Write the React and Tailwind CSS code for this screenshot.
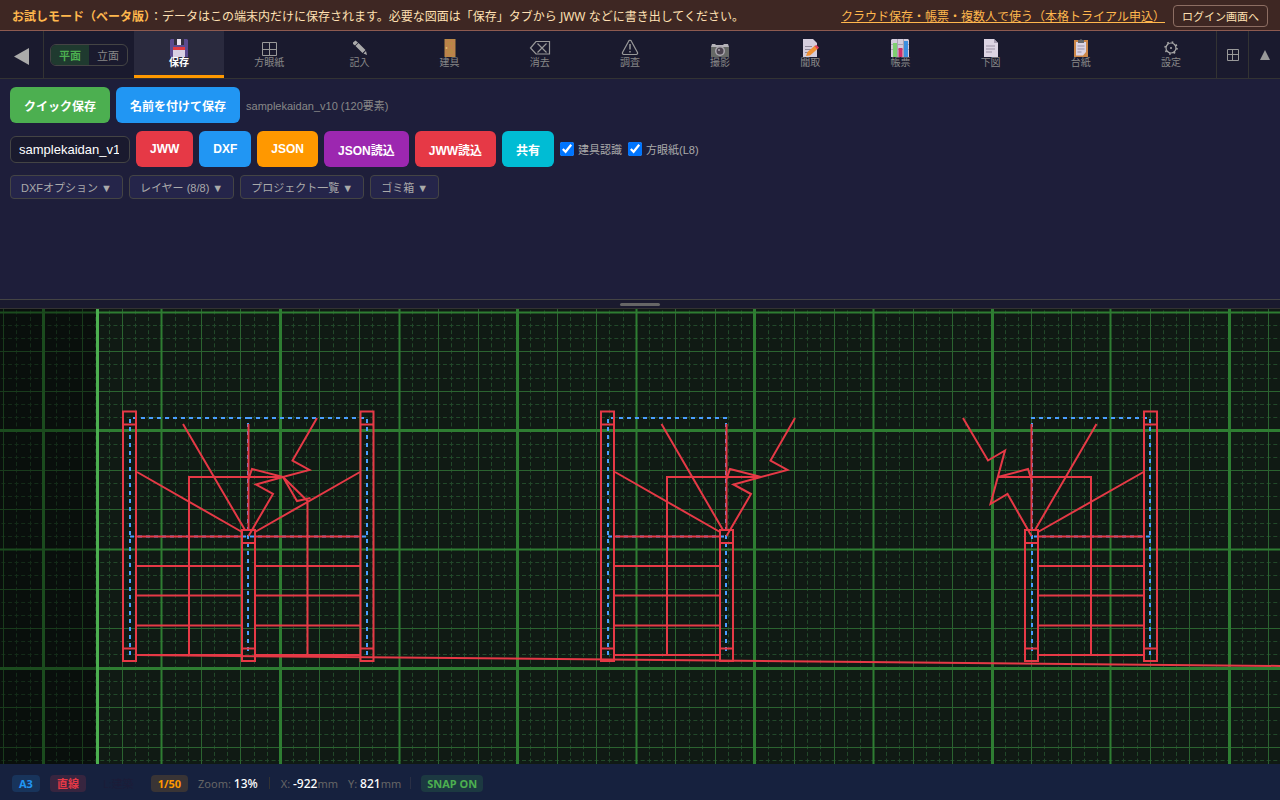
import React from 'react';

const TABS = [
  { icon: 'floppy', label: '保存', active: true },
  { icon: 'grid', label: '方眼紙' },
  { icon: 'pencil', label: '記入' },
  { icon: 'door', label: '建具' },
  { icon: 'erase', label: '消去' },
  { icon: 'warning', label: '調査' },
  { icon: 'camera', label: '撮影' },
  { icon: 'memo', label: '聞取' },
  { icon: 'chart', label: '帳票' },
  { icon: 'page', label: '下図' },
  { icon: 'clipboard', label: '台紙' },
  { icon: 'gear', label: '設定' },
];

const ACTIONS = [
  { label: 'JWW', color: 'bg-[#e63946]' },
  { label: 'DXF', color: 'bg-[#2196f3]' },
  { label: 'JSON', color: 'bg-[#ff9800]' },
  { label: 'JSON読込', color: 'bg-[#9c27b0]' },
  { label: 'JWW読込', color: 'bg-[#e63946]' },
  { label: '共有', color: 'bg-[#00bcd4]' },
];

const PANELS = ['DXFオプション ▼', 'レイヤー (8/8) ▼', 'プロジェクト一覧 ▼', 'ゴミ箱 ▼'];

const ICONS = {
  floppy: (
    <>
      <path d="M1 0h16l1 1v17H1L0 17V1Z" fill="#5b4b8f" />
      <path d="M4 0h10v6H4Z" fill="#32303f" />
      <path d="M7 0h4v6H7Z" fill="#e6e0ee" />
      <path d="M3 9h12v9H3Z" fill="#d9d0e3" />
      <path d="M3 8h12v3H3Z" fill="#e23b41" />
    </>
  ),
  grid: <path d="M2.500 3.500h14v13h-14ZM9.500 3.500v13M2.500 10.500h14" fill="none" stroke="#999" />,
  pencil: (
    <path d="M3 3.500l2.500-2 2.500 2-3 3L3 5ZM5.500 7l3-3 7 7-3 3ZM13.500 14.500l2.500-2.500 1 4Z" fill="#aaa" />
  ),
  door: (
    <>
      <path d="M3.500 0h11v18h-11Z" fill="#b98847" />
      <path d="M5 2h8v5H5ZM5 9h8v7H5Z" fill="none" stroke="#c87458" strokeDasharray="1 1" />
      <circle cx="5.500" cy="9" r="1" fill="#e3bd72" />
    </>
  ),
  erase: <path d="M-.5 9l5.500-6.500H18.500v12.500H5ZM6.500 4.500l9 9M15.500 4.500l-9 9" fill="none" stroke="#999" strokeWidth="1.200" />,
  warning: (
    <>
      <path d="M9 1.500Q10 1 10.500 2.500L16.500 13.500Q17 15 15.500 15.500H2.500Q1 15 1.500 13.500L7.500 2.500Q8 1 9 1.500Z" fill="none" stroke="#999" strokeWidth="1.200" />
      <path d="M9 5v5.500M9 12v1.500" stroke="#999" strokeWidth="1.500" />
    </>
  ),
  camera: (
    <>
      <path d="M0 8h18v10H0Z" fill="#666966" />
      <path d="M1 5h3l1 1h7l1-1h4l1 3H0Z" fill="#b5b3b9" />
      <circle cx="9" cy="12" r="5" fill="#a9a5ad" />
      <circle cx="9" cy="12" r="3.500" fill="#4b434f" />
      <circle cx="8" cy="11" r="1" fill="#a9a5ad" />
    </>
  ),
  memo: (
    <>
      <path d="M2 0h10l4 4v14H2Z" fill="#d5cddd" />
      <path d="M4 7.500h7M4 10.500h6M4 13.500h4" stroke="#8e8799" />
      <path d="M5 17l1.500-4L14 6.500l3 3L9 16.500Z" fill="#ef9135" />
      <path d="M13.500 7l2-1 2.500 2.500-1.500 2Z" fill="#e0415b" />
    </>
  ),
  chart: (
    <>
      <path d="M1 0h16l1 1v17H0V1Z" fill="#d3cbdc" />
      <path d="M0 5.500h18M0 10.500h18M6.500 0v18M12.500 0v18" stroke="#aaa2b3" />
      <path d="M2 4h4v14H2Z" fill="#7fcf71" />
      <path d="M7.500 9h4v9h-4Z" fill="#cf2f68" />
      <path d="M13 2h4v16h-4Z" fill="#3d8fe0" />
    </>
  ),
  page: (
    <>
      <path d="M2 0h10l4 4v14H2Z" fill="#dcd4e3" />
      <path d="M12 0v4h4Z" fill="#a79eb2" />
      <path d="M4 7h9M4 10h9M4 13h6" stroke="#9a91a5" />
    </>
  ),
  clipboard: (
    <>
      <path d="M2 1h14v17H2Z" fill="#cc8748" />
      <path d="M4 3h10v10l-3 3.500H4Z" fill="#dcd4e3" />
      <path d="M6 1h1.500L9 0l1.500 1H12v3H6Z" fill="#66676a" />
      <path d="M5.500 7h7M5.500 10h7M5.500 13h4" stroke="#9a91a5" />
    </>
  ),
  gear: (
    <g fill="none" stroke="#aaa">
      <circle cx="9" cy="9" r="5" strokeWidth="1.200" />
      <circle cx="9" cy="9" r="6" strokeWidth="1.500" strokeDasharray="1.700 3.010" />
      <circle cx="9" cy="9" r="1" fill="#aaa" stroke="none" />
    </g>
  ),
};

function Icon({ name }) {
  return (
    <svg className="size-[18px] shrink-0 overflow-visible" viewBox="0 0 18 18" aria-hidden="true">
      {ICONS[name]}
    </svg>
  );
}

function TrialBanner() {
  return (
    <div className="flex h-[31px] items-center border-b border-[#8d5a50] bg-[#3e2723] px-3 pt-px text-xs leading-[normal] text-[#ffe0b2]">
      <p className="flex-1">
        <strong className="text-[#ffb74d]">お試しモード（ベータ版）</strong>
        ：データはこの端末内だけに保存されます。必要な図面は「保存」タブから JWW などに書き出してください。
      </p>
      <a href="#cloud" className="mr-2 text-[#ffb74d] underline">
        クラウド保存・帳票・複数人で使う（本格トライアル申込）
      </a>
      <button type="button" className="h-[22px] rounded border border-[#8d6e63] px-2 text-[11px] leading-[normal]">
        ログイン画面へ
      </button>
    </div>
  );
}

function TabBar() {
  return (
    <nav className="flex h-12 border-b border-[#333] bg-[#1a1a2e] text-[#888]">
      <button type="button" aria-label="戻る" className="flex w-11 items-center justify-center border-r border-[#333] pt-[3px]">
        <svg className="h-[17px] w-[15px]" viewBox="0 0 15 17">
          <path d="M0 8.500L15 0v17Z" fill="#aaa" />
        </svg>
      </button>
      <div className="flex w-[90px] items-center justify-center">
        <div className="flex h-[22px] overflow-hidden rounded-md border border-[#444] text-[11px] leading-[normal]">
          <button type="button" className="w-[38px] bg-[#1f3a2f] font-bold text-[#4caf50]">平面</button>
          <button type="button" className="w-[38px]">立面</button>
        </div>
      </div>
      {TABS.map(({ icon, label, active }) => (
        <button
          key={label}
          type="button"
          className={`flex flex-1 flex-col items-center justify-center border-b-[3px] text-[10px] ${
            active ? 'border-[#ff9800] bg-[#2a2a3e] font-bold text-white' : 'border-transparent'
          }`}
        >
          <Icon name={icon} />
          <span className="leading-[10px]">{label}</span>
        </button>
      ))}
      <button type="button" aria-label="分割" className="flex w-8 items-center justify-center border-l border-[#333]">
        <svg className="size-3" viewBox="0 0 12 12">
          <path d="M.5 .5h11v11H.5ZM5.500 .5v11M.5 5.500h11" fill="none" stroke="#999" />
        </svg>
      </button>
      <button type="button" aria-label="閉じる" className="flex w-8 items-center justify-center border-l border-[#333]">
        <svg className="size-[10px]" viewBox="0 0 10 10">
          <path d="M5 0l5 10H0Z" fill="#999" />
        </svg>
      </button>
    </nav>
  );
}

function SavePanel() {
  return (
    <section className="flex h-[221px] flex-col gap-2 border-b border-[#444] bg-[#1e1e3a] px-[10px] py-2 font-['Liberation_Sans','Noto_Sans_CJK_JP',sans-serif] text-xs leading-[normal]">
      <div className="flex items-center gap-[6px]">
        <button type="button" className="h-9 rounded-md bg-[#4caf50] px-[14px] font-bold text-white">クイック保存</button>
        <button type="button" className="h-9 rounded-md bg-[#2196f3] px-[14px] font-bold text-white">名前を付けて保存</button>
        <span className="text-[11px] text-[#888]">samplekaidan_v10 (120要素)</span>
      </div>
      <div className="flex items-center gap-[6px]">
        <input
          aria-label="ファイル名"
          defaultValue="samplekaidan_v10"
          className="h-[27px] w-[120px] rounded-md border border-[#444] bg-[#1a1a2e] pr-[10px] pl-2 text-[13px] text-white"
        />
        {ACTIONS.map(({ label, color }) => (
          <button key={label} type="button" className={`h-9 rounded-md px-[14px] font-bold text-white ${color}`}>
            {label}
          </button>
        ))}
        <label className="flex items-center gap-1 text-[11px] text-[#aaa]">
          <input type="checkbox" defaultChecked className="size-[14px]" />
          建具認識
        </label>
        <label className="flex items-center gap-1 text-[11px] text-[#aaa]">
          <input type="checkbox" defaultChecked className="size-[14px]" />
          方眼紙(L8)
        </label>
      </div>
      <div className="flex gap-[6px]">
        {PANELS.map((label) => (
          <button
            key={label}
            type="button"
            className="h-6 rounded border border-[#444] bg-[#25254a] px-[10px] text-[11px] leading-[normal] text-[#aaa]"
          >
            {label}
          </button>
        ))}
      </div>
    </section>
  );
}

// drawing area starts 309px below the top of the window
const TOP = 309;

function gridLines(length, origin) {
  const lines = [];
  for (let i = -40; i < 300; i++) {
    const at = Math.floor(origin + i * 13.18) + 0.5;
    if (at < 0 || at > length) continue;
    lines.push({ at, kind: i % 18 === 0 ? 'bold' : i % 9 === 0 ? 'mid' : i % 3 === 0 ? 'thin' : 'dash' });
  }
  return lines;
}

const PEN = {
  bold: { stroke: '#2e7d32', strokeWidth: 3 },
  mid: { stroke: '#2e7d32', strokeWidth: 2 },
  thin: { stroke: '#2b6330', strokeWidth: 1 },
  dash: { stroke: '#22482a', strokeWidth: 1, strokeDasharray: '4 2.59', strokeDashoffset: -1.4 },
};

function Grid() {
  const order = ['dash', 'thin', 'mid', 'bold'];
  const xs = gridLines(4000, 43.2);
  const ys = gridLines(2000, 430.9 - TOP);
  return order.map((kind) => (
    <g key={kind} {...PEN[kind]}>
      {xs.filter((l) => l.kind === kind).map((l) => <line key={`x${l.at}`} x1={l.at} x2={l.at} y1="0" y2="2000" />)}
      {ys.filter((l) => l.kind === kind).map((l) => <line key={`y${l.at}`} y1={l.at} y2={l.at} x1="0" x2="4000" />)}
    </g>
  ));
}

// posts carry a short cap at both ends
function Post({ x, top }) {
  return <path d={`M${x - 6.5} ${top}H${x + 6.5}V661H${x - 6.5}ZM${x - 6.5} ${top + 13}H${x + 6.5}M${x - 6.5} 648.5H${x + 6.5}`} />;
}

function Treads({ x }) {
  return <path d={`M${x} 536.5h105M${x} 566h105M${x} 595.5h105M${x} 625.5h105M${x} 655h105`} />;
}

function Stairs() {
  return (
    <g transform={`translate(0 ${-TOP})`} fill="none" strokeWidth="2">
      <g stroke="#4a9eff" strokeDasharray="4 4">
        <path d="M130 655V418H248V655M248 418H367V655M130 536.5H367" />
        <path d="M608 655V418H726V655M608 536.5H726" />
        <path d="M1150 655V418H1032V655M1150 536.5H1032" />
      </g>
      <g stroke="#e63946">
        <Post x={129.5} top={411.5} />
        <Post x={248.5} top={530} />
        <Post x={367} top={411.5} />
        <Treads x={136} />
        <Treads x={255} />
        <path d="M189 655V477H283L307.500 501V655M248.500 424V530M183 424L245 530M137 472L242 532M360 472L255 532" />
        <path d="M317 418L292.500 460.500L309.500 470L283 477L252 469L248.500 479M283 477L256 484.500L273 494L248.500 536M283 477L297 501L310.500 498" />
        <Post x={607.5} top={411.5} />
        <Post x={726.5} top={530} />
        <Treads x={614.5} />
        <path d="M667 655V477H761M726.500 424V530M661.500 424L723 530M615 472L720 532" />
        <path d="M795 418L770.500 460.500L787.500 470L761 477L730 469L726.500 479M761 477L733.500 484.500L751 494L726.500 536" />
        <Post x={1031.5} top={530} />
        <Post x={1150.5} top={411.5} />
        <Treads x={1038.5} />
        <path d="M1091 655V477H998M1031.500 424V530M1096.500 424L1035 530M1143.500 472L1038 532" />
        <path d="M963 418L988 460.500L1005 450.500L990.500 504L1007.500 494L1031.500 536M998 477L1028 469L1031.500 480" />
        <path d="M136 655L4000 692" />
      </g>
    </g>
  );
}

function Canvas() {
  return (
    <main className="min-h-0 flex-1 bg-[#101a14]">
      <svg className="block size-full" role="img" aria-label="階段平面図">
        <Grid />
        <rect width="97" height="100%" fill="#000" fillOpacity="0.4" />
        <line x1="97.5" x2="97.5" y1="0" y2="100%" stroke="#4caf50" strokeWidth="3" />
        <Stairs />
      </svg>
    </main>
  );
}

function StatusBar() {
  return (
    <footer className="flex h-9 items-center bg-[#16213e] px-3 pt-[2px] text-[11px] leading-[17px] text-[#666]">
      <span className="rounded bg-[#18345b] px-[7px] font-bold text-[#2196f3]">A3</span>
      <span className="ml-[10px] rounded bg-[#37253f] px-[7px] font-bold text-[#e63946]">直線</span>
      <span className="ml-[10px] px-[7px] text-[#1c1c38]">L:建築</span>
      <span className="ml-[10px] rounded bg-[#393435] px-[7px] font-bold text-[#ff9800]">1/50</span>
      <span className="ml-[10px]">Zoom: <b className="text-xs font-medium text-white">13%</b></span>
      <span className="mx-[11px] h-3 w-px bg-[#333]" />
      <span>X: <b className="text-xs font-medium text-white">-922</b>mm</span>
      <span className="ml-[10px]">Y: <b className="text-xs font-medium text-white">821</b>mm</span>
      <span className="mr-[10px] ml-[9px] h-3 w-px bg-[#2a2f45]" />
      <span className="rounded bg-[#1c3941] px-[6px] font-bold text-[#4caf50]">SNAP ON</span>
    </footer>
  );
}

export default function App() {
  return (
    <div className="flex h-screen flex-col bg-[#1a1a2e] font-['Noto_Sans','Noto_Sans_CJK_JP',sans-serif]">
      <TrialBanner />
      <TabBar />
      <SavePanel />
      <div className="flex h-[9px] items-center justify-center border-b border-[#333]">
        <div className="h-[3px] w-10 rounded bg-[#666]" />
      </div>
      <Canvas />
      <StatusBar />
    </div>
  );
}
